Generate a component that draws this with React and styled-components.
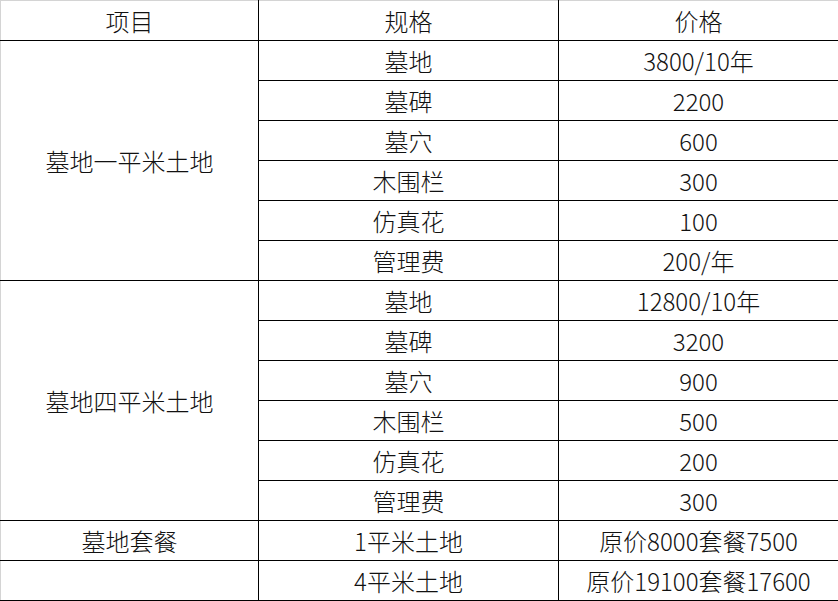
import React from "react";
import styled, { createGlobalStyle } from "styled-components";

const Global = createGlobalStyle`
  html, body { margin: 0; padding: 0; background: #fff; }
  body { font-family: "Noto Sans CJK SC", "Noto Sans", sans-serif; }
`;

const Table = styled.table`
  border-collapse: collapse;
  table-layout: fixed;
  width: 838px;
  font-size: 24px;
  font-weight: 300;
  color: #111;
`;

const Col = styled.col`
  width: ${(p) => p.$w}px;
`;

const Row = styled.tr`
  height: 40px;
`;

const Cell = styled.td`
  border: 1px solid #000;
  border-left-color: ${(p) => (p.$first ? "#d4d4d4" : "#000")};
  border-top-color: ${(p) => (p.$top ? "#d4d4d4" : "#000")};
  text-align: center;
  vertical-align: middle;
  padding: 0;
  line-height: 1;
  white-space: nowrap;
`;

const groups = [
  {
    name: "墓地一平米土地",
    items: [
      ["墓地", "3800/10年"],
      ["墓碑", "2200"],
      ["墓穴", "600"],
      ["木围栏", "300"],
      ["仿真花", "100"],
      ["管理费", "200/年"],
    ],
  },
  {
    name: "墓地四平米土地",
    items: [
      ["墓地", "12800/10年"],
      ["墓碑", "3200"],
      ["墓穴", "900"],
      ["木围栏", "500"],
      ["仿真花", "200"],
      ["管理费", "300"],
    ],
  },
];

export default function App() {
  return (
    <>
      <Global />
      <Table>
        <colgroup>
          <Col $w={258} />
          <Col $w={300} />
          <Col $w={280} />
        </colgroup>
        <tbody>
          <Row>
            <Cell $first $top>项目</Cell>
            <Cell $top>规格</Cell>
            <Cell $top>价格</Cell>
          </Row>
          {groups.map((g) =>
            g.items.map((it, i) => (
              <Row key={g.name + i}>
                {i === 0 && (
                  <Cell $first rowSpan={g.items.length}>
                    {g.name}
                  </Cell>
                )}
                <Cell>{it[0]}</Cell>
                <Cell>{it[1]}</Cell>
              </Row>
            ))
          )}
          <Row>
            <Cell $first>墓地套餐</Cell>
            <Cell>1平米土地</Cell>
            <Cell>原价8000套餐7500</Cell>
          </Row>
          <Row>
            <Cell $first></Cell>
            <Cell>4平米土地</Cell>
            <Cell>原价19100套餐17600</Cell>
          </Row>
        </tbody>
      </Table>
    </>
  );
}
